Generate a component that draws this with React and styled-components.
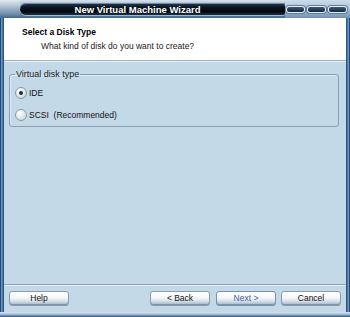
import React from "react";
import styled, { createGlobalStyle } from "styled-components";

const Global = createGlobalStyle`
  html, body { margin: 0; padding: 0; background: #c4d9e7; }
  body { font-family: "Liberation Sans", "DejaVu Sans", sans-serif; }
`;

const Window = styled.div`
  width: 350px;
  height: 317px;
  display: flex;
  flex-direction: column;
  background: #c4d9e7;
  overflow: hidden;
`;

const TitleRow = styled.div`
  height: 18px;
  display: flex;
  align-items: stretch;
  background: linear-gradient(#d9e3ec 0px, #b7c8d8 3px, #8da6be 9px, #5b7c9c 15px, #3f6890 18px);
  flex-shrink: 0;
`;

const LeftCap = styled.div`
  width: 20px;
  background: linear-gradient(#e3eaf0, #a8bccd 40%, #6e8aa6 80%, #3d6791);
`;

const TitleBar = styled.div`
  flex: 1;
  margin: 3px 0 3px 0;
  border-radius: 6px 2px 2px 6px;
  background: linear-gradient(#2a3d52 0%, #0b1622 35%, #02070d 70%, #1d3047 100%);
  box-shadow: inset 0 1px 0 #6f8aa6, 0 1px 0 #9fb8cf;
  display: flex;
  align-items: center;
  justify-content: center;
  padding-right: 30px;
  color: #ffffff;
  font-size: 9.5px;
  font-weight: bold;
`;

const Controls = styled.div`
  width: 62px;
  display: flex;
  align-items: center;
  justify-content: flex-end;
  gap: 2px;
  padding-right: 3px;
  background: linear-gradient(#cfdce8, #a9c0d6 50%, #6f92b5);
`;

const Pill = styled.div`
  width: 17px;
  height: 5px;
  border-radius: 3px;
  background: linear-gradient(#3c5a7c, #12253a);
  border: 1px solid #e8f0f7;
  box-shadow: 0 0 0 1px #5d7c9b;
`;

const Frame = styled.div`
  flex: 1;
  display: flex;
  flex-direction: column;
  border-left: 1px solid #1f4a78;
  border-right: 1px solid #1f4a78;
  box-shadow: inset 1px 0 0 #6f96bf, inset 2px 0 0 #4d77a3, inset 3px 0 0 #2c5686,
    inset -1px 0 0 #6f96bf, inset -2px 0 0 #4d77a3, inset -3px 0 0 #2c5686;
  padding: 0 3px;
`;

const Header = styled.div`
  height: 43px;
  background: #ffffff;
  border-bottom: 1px solid #9eb1c0;
  box-shadow: 0 1px 0 #eaf2f8;
  display: flex;
  flex-direction: column;
  padding: 9px 0 0 18px;
  box-sizing: border-box;
  flex-shrink: 0;
`;

const HeaderTitle = styled.div`
  font-size: 8.5px;
  font-weight: bold;
  color: #000;
  line-height: 11px;
`;

const HeaderSub = styled.div`
  font-size: 8.5px;
  color: #1a1a1a;
  line-height: 11px;
  margin-top: 3px;
  padding-left: 19px;
`;

const Content = styled.div`
  flex: 1;
  padding: 8px 7px 0 5px;
`;

const Group = styled.fieldset`
  margin: 0;
  border: 1px solid #8a9fb0;
  border-radius: 3px;
  padding: 2px 6px 0 5px;
  box-shadow: inset 1px 1px 0 #dfeaf2;
`;

const Legend = styled.legend`
  font-size: 9px;
  line-height: 11px;
  color: #1a1a1a;
  padding: 0 1px;
  margin-left: 0px;
`;

const RadioRow = styled.label`
  display: flex;
  align-items: center;
  gap: 2px;
  height: 22px;
  font-size: 8.5px;
  color: #111;
`;

const RadioCircle = styled.span`
  width: 10px;
  height: 10px;
  border-radius: 50%;
  border: 1px solid #8c9aa6;
  background: radial-gradient(circle at 35% 30%, #ffffff, #dbe2e8 60%, #b9c4cd);
  display: flex;
  align-items: center;
  justify-content: center;
  &::after {
    content: "";
    width: 4px;
    height: 4px;
    border-radius: 50%;
    background: ${(p) => (p.$checked ? "#1f2d3a" : "transparent")};
  }
`;

const Footer = styled.div`
  height: 27px;
  border-top: 1px solid #8fa4b6;
  box-shadow: inset 0 1px 0 #e6eff6;
  display: flex;
  align-items: center;
  padding: 0 5px 0 5px;
  flex-shrink: 0;
`;

const Spacer = styled.div`
  flex: 1;
`;

const Button = styled.button`
  width: ${(p) => p.$w || 60}px;
  height: 15px;
  margin-left: ${(p) => p.$ml || 0}px;
  padding: 0;
  font-family: inherit;
  font-size: 8.5px;
  color: ${(p) => (p.$primary ? "#3f6394" : "#111")};
  border: 1px solid ${(p) => (p.$primary ? "#7592b6" : "#8c9cab")};
  border-radius: 3px;
  background: linear-gradient(#ffffff 0%, #f4f7fa 45%, #d7e0e9 70%, #9fb2c5 100%);
  box-shadow: inset 0 -1px 0 #7f94a8;
  line-height: 13px;
`;

const BottomEdge = styled.div`
  height: 5px;
  background: linear-gradient(#d7e5f0, #9fb8cf 50%, #2a5383);
  flex-shrink: 0;
`;

export default function App() {
  return (
    <>
      <Global />
      <Window>
        <TitleRow>
          <LeftCap />
          <TitleBar>New Virtual Machine Wizard</TitleBar>
          <Controls>
            <Pill />
            <Pill />
            <Pill />
          </Controls>
        </TitleRow>
        <Frame>
          <Header>
            <HeaderTitle>Select a Disk Type</HeaderTitle>
            <HeaderSub>What kind of disk do you want to create?</HeaderSub>
          </Header>
          <Content>
            <Group>
              <Legend>Virtual disk type</Legend>
              <RadioRow>
                <RadioCircle $checked />
                IDE
              </RadioRow>
              <RadioRow>
                <RadioCircle />
                SCSI&nbsp;&nbsp;(Recommended)
              </RadioRow>
            </Group>
          </Content>
          <Footer>
            <Button>Help</Button>
            <Spacer />
            <Button>&lt; Back</Button>
            <Button $primary $ml={6}>Next &gt;</Button>
            <Button $ml={5}>Cancel</Button>
          </Footer>
        </Frame>
        <BottomEdge />
      </Window>
    </>
  );
}
